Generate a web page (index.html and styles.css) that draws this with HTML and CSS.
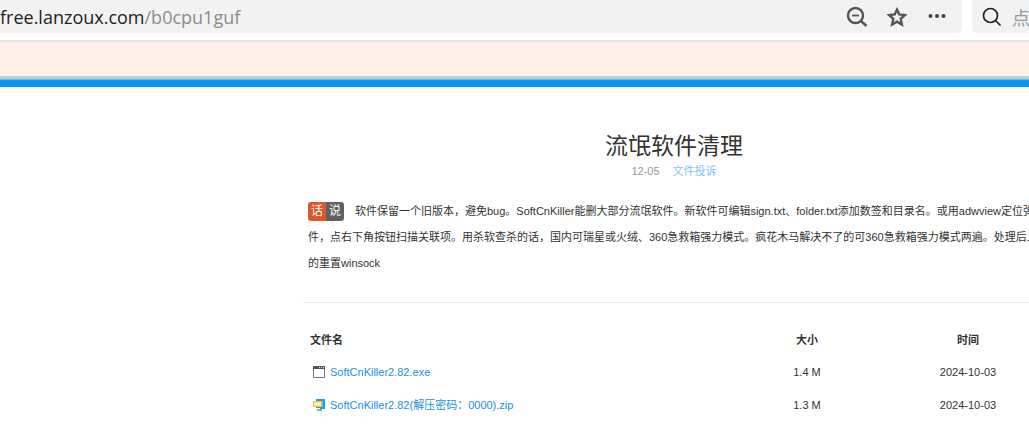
FILE: index.html
```html
<!DOCTYPE html>
<html lang="zh-CN">
<head>
<meta charset="utf-8">
<title>流氓软件清理</title>
<link rel="stylesheet" href="styles.css">
</head>
<body>
<header class="toolbar">
  <div class="address">
    <div class="url">free.lanzoux.com<span class="path">/b0cpu1guf</span></div>
    <button class="tool" type="button" aria-label="缩小">
      <svg width="22" height="22" viewBox="0 0 22 22" fill="none" stroke="#555" stroke-width="2.4"><circle cx="9.500" cy="9.500" r="7.500"/><path d="M15 15l5.500 5"/><path d="M6 9.500h7" stroke-width="1.800"/></svg>
    </button>
    <button class="tool" type="button" aria-label="收藏">
      <svg width="22" height="22" viewBox="0 0 22 22" fill="none" stroke="#555" stroke-width="2.4"><path d="M11 3.500l2.300 5 5.500.6-4.100 3.700 1.200 5.700-4.900-2.900-4.900 2.900 1.200-5.700-4.100-3.700 5.500-.6z"/></svg>
    </button>
    <button class="tool" type="button" aria-label="更多">
      <svg width="22" height="22" viewBox="0 0 22 22" fill="#444"><circle cx="4.500" cy="10" r="2"/><circle cx="11" cy="10" r="2"/><circle cx="17.500" cy="10" r="2"/></svg>
    </button>
  </div>
  <label class="search">
    <svg width="20" height="20" viewBox="0 0 20 20" fill="none" stroke="#222" stroke-width="1.700"><circle cx="8.500" cy="8.500" r="7"/><path d="M13.500 13.500l5 5"/></svg>
    <input class="search-input" type="text" placeholder="点" aria-label="搜索">
  </label>
</header>
<div class="notice"></div>
<main class="content">
  <h1 class="title">流氓软件清理</h1>
  <div class="meta"><span>12-05</span><a class="report" href="#">文件投诉</a></div>
  <p class="intro"><span class="badge"><span class="badge-a">话</span><span class="badge-b">说</span></span>软件保留一个旧版本，避免bug。SoftCnKiller能删大部分流氓软件。新软件可编辑sign.txt、folder.txt添加数签和目录名。或用adwview定位弹窗或文<br>件，点右下角按钮扫描关联项。用杀软查杀的话，国内可瑞星或火绒、360急救箱强力模式。疯花木马解决不了的可360急救箱强力模式两遍。处理后上不了网<br>的重置winsock</p>
  <table class="files">
    <thead>
      <tr><th class="name">文件名</th><th class="size">大小</th><th class="time">时间</th></tr>
    </thead>
    <tbody>
      <tr>
        <td class="name"><a class="file" href="#"><svg width="12" height="12" viewBox="0 0 12 12"><path d="M.5.5h11v11H.5z" fill="#fff" stroke="#777"/><path d="M0 0h12v3H0z" fill="#555"/><path d="M6 1h1v1H6zM8 1h1v1H8zM10 1h1v1h-1z" fill="#ddd"/></svg>SoftCnKiller2.82.exe</a></td>
        <td>1.4 M</td><td>2024-10-03</td>
      </tr>
      <tr>
        <td class="name"><a class="file" href="#"><svg width="12" height="12" viewBox="0 0 12 12"><path d="M3 0h9v10H9v2H4v-2h3V9H3z" fill="#2b9be0"/><path d="M9 2v6M4 11h5" stroke="#a6dafa" fill="none"/><path d="M.5 2.500h8v5h-8z" fill="#fbe98b" stroke="#e2c552"/><path d="M2 4h5v2H2z" fill="#fff3b0"/></svg>SoftCnKiller2.82(解压密码：0000).zip</a></td>
        <td>1.3 M</td><td>2024-10-03</td>
      </tr>
    </tbody>
  </table>
</main>
</body>
</html>
```
FILE: styles.css
```css
* { box-sizing: border-box; }

body {
  margin: 0;
  overflow: hidden;
  background: #fff;
  color: #333;
  font: 11px/16px "Liberation Sans", "Noto Sans CJK SC", sans-serif;
}

a { color: #1c8fe0; text-decoration: none; }

.toolbar {
  display: flex;
  gap: 10px;
  padding-bottom: 7px;
  border-bottom: 2px solid #e3e4e6;
}

.address {
  display: flex;
  flex: 1;
  align-items: center;
  gap: 18px;
  height: 33px;
  padding-right: 14px;
  border-radius: 0 0 5px 0;
  background: #f2f2f2;
}

.url {
  flex: 1;
  color: #222;
  font: 18px/32px "Open Sans", "Noto Sans", sans-serif;
}

.path { color: #8c8c8c; }

.tool {
  display: flex;
  padding: 0;
  border: 0;
  background: none;
}

.search {
  display: flex;
  align-items: center;
  gap: 10px;
  width: 57px;
  height: 33px;
  padding-left: 10px;
  border-radius: 0 0 0 5px;
  background: #f2f2f2;
  overflow: hidden;
}

.search svg { flex: none; }

.search-input {
  flex: none;
  width: 80px;
  padding: 0;
  border: 0;
  background: none;
  font: 18px/24px "Noto Sans CJK SC", sans-serif;
}

.search-input::placeholder { color: #999; }

.notice {
  height: 45px;
  border-bottom: 7px solid #0a93f5;
  background: linear-gradient(#fff1e8 34px, #b0d4d9 34px, #b0d4d9 37px, #7fb5b5 37px);
}

.content {
  margin-right: -16px;
  padding: 38px 0 0 303px;
}

.title {
  margin: 0;
  font: 400 23px/38px "Noto Sans CJK SC", sans-serif;
  text-align: center;
}

.meta {
  display: flex;
  justify-content: center;
  gap: 13px;
  color: #999;
}

.report { color: #7cc6f2; }

.intro {
  margin: 0;
  padding: 19px 5px 26px;
  border-bottom: 1px solid #e8e8e8;
  line-height: 26px;
  white-space: nowrap;
}

.badge {
  display: inline-flex;
  margin-right: 11px;
  border-radius: 3px;
  overflow: hidden;
  color: #fff;
  font-size: 12px;
  line-height: 19px;
  text-align: center;
  vertical-align: baseline;
}

.badge-a { width: 18px; background: #d9592b; }
.badge-b { width: 18px; background: #616161; }

.files {
  width: 100%;
  margin-top: 22px;
  border-collapse: collapse;
  table-layout: fixed;
}

.files th, .files td {
  height: 33px;
  padding: 0;
  text-align: center;
}

.files th { height: 30px; }

.files .name { padding-left: 7px; text-align: left; }
.size { width: 168px; }
.time { width: 154px; }

.file {
  display: flex;
  align-items: center;
  gap: 5px;
  padding-left: 3px;
}
```
